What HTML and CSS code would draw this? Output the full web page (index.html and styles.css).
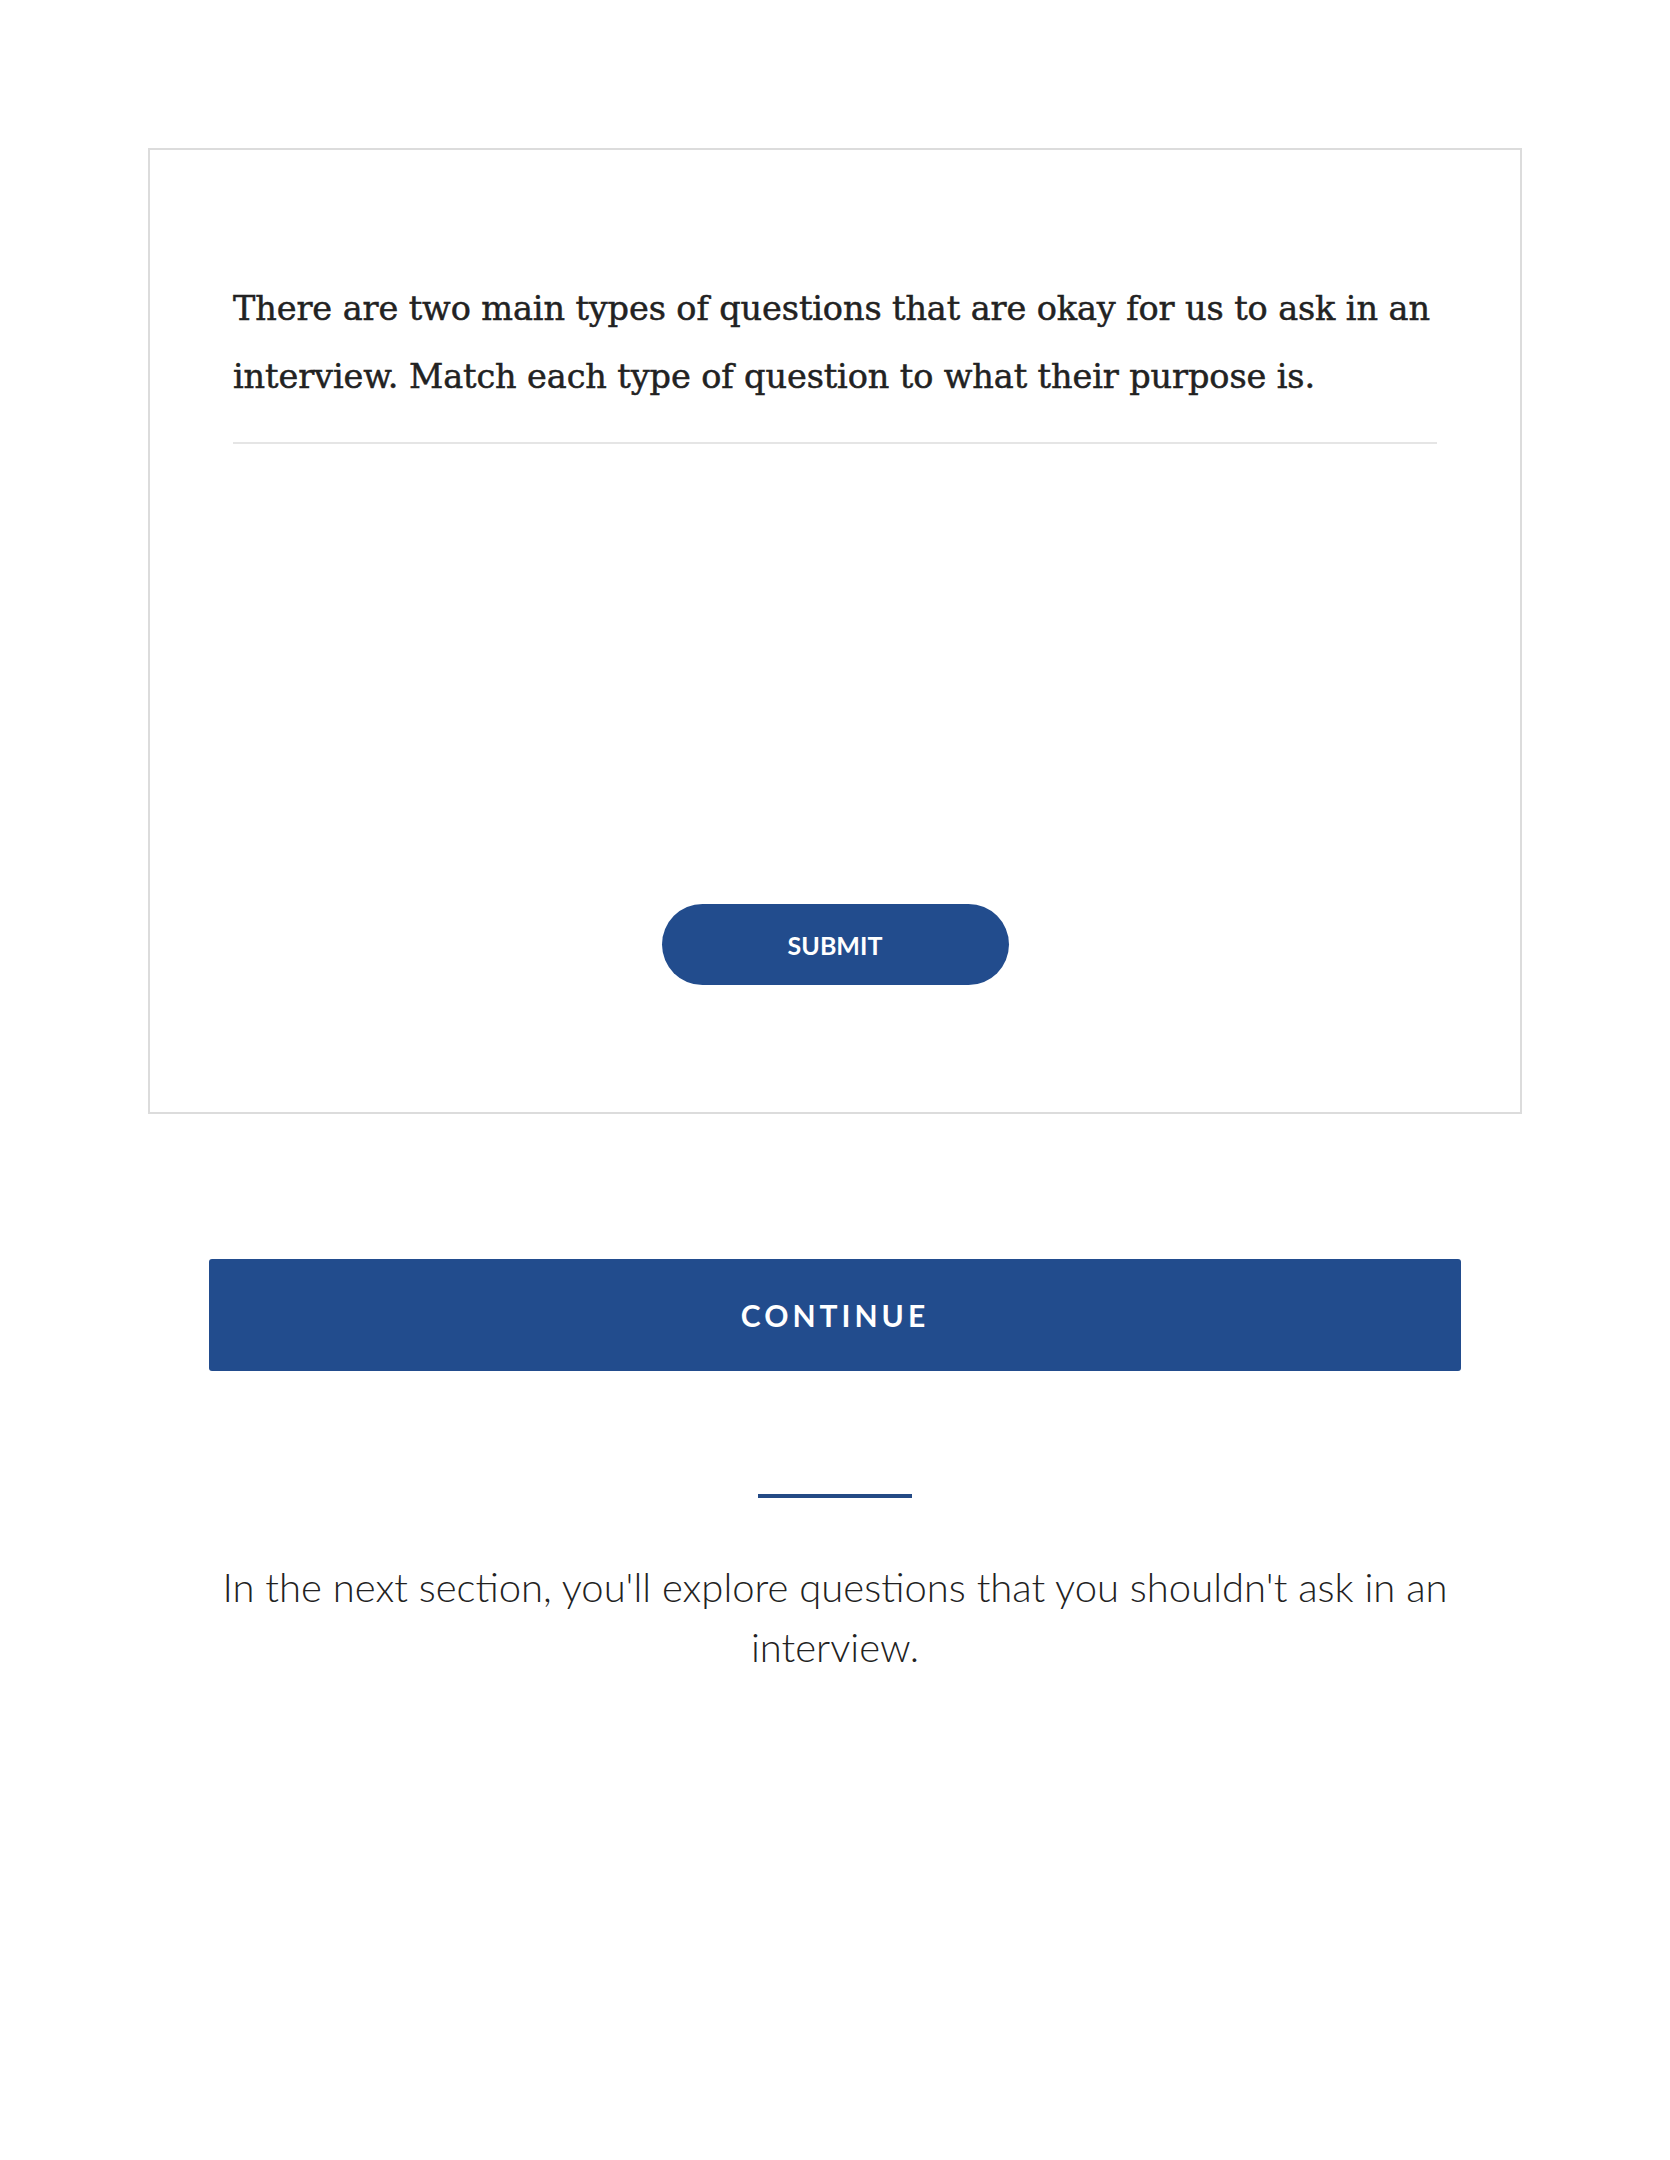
FILE: index.html
```html
<!DOCTYPE html>
<html lang="en">
<head>
  <meta charset="UTF-8" />
  <title>Matching</title>
  <link rel="stylesheet" href="styles.css">
</head>
<body>

  <div class="block-knowledge">
    <div class="question-text">
      There are two main types of questions that are okay for us to ask in an interview. Match each type of question to what their purpose is.
    </div>
    <div class="match-area"></div>
    <div class="submit-row">
      <button class="submit-btn">SUBMIT</button>
    </div>
  </div>

  <div class="continue-wrap">
    <button class="continue-btn">CONTINUE</button>
  </div>

  <div class="divider-short"></div>

  <p class="next-text">In the next section, you'll explore questions that you shouldn't ask in an interview.</p>

</body>
</html>
```

FILE: styles.css
```css
body { margin: 0; background: #fff; font-family: Lato, "Open Sans", Arial, sans-serif; color: #333; }
.block-knowledge {
  width: 1374px; box-sizing: border-box; margin: 148px auto 0; border: 2px solid #dcdcdc;
  padding: 125px 83px 127px 83px;
}
.question-text {
  font-family: "DejaVu Serif", "Liberation Serif", serif; font-size: 33.5px; line-height: 68px;
  color: #222; -webkit-text-stroke: 0.5px #222; letter-spacing: -0.1px;
  padding-bottom: 31px; border-bottom: 2px solid #e5e5e5;
}
.match-area { height: 460px; }
.submit-row { display: flex; justify-content: center; }
.submit-btn {
  width: 347px; height: 81px; border: none; border-radius: 41px; background: #224c8d;
  color: #fff; font-family: Lato, sans-serif; font-weight: bold; font-size: 25px; cursor: pointer;
}
.continue-wrap { display: flex; justify-content: center; margin-top: 145px; }
.continue-btn {
  width: 1252px; height: 112px; border: none; border-radius: 3px; background: #224c8d;
  color: #fff; font-family: Lato, sans-serif; font-weight: bold; font-size: 30px;
  letter-spacing: 4px; cursor: pointer;
}
.divider-short { width: 154px; height: 4px; background: #244a85; margin: 123px auto 0; }
.next-text {
  margin: 59px auto 0; width: 1260px; text-align: center; font-size: 40px; line-height: 60px;
  font-weight: 300; color: #222;
}
```
